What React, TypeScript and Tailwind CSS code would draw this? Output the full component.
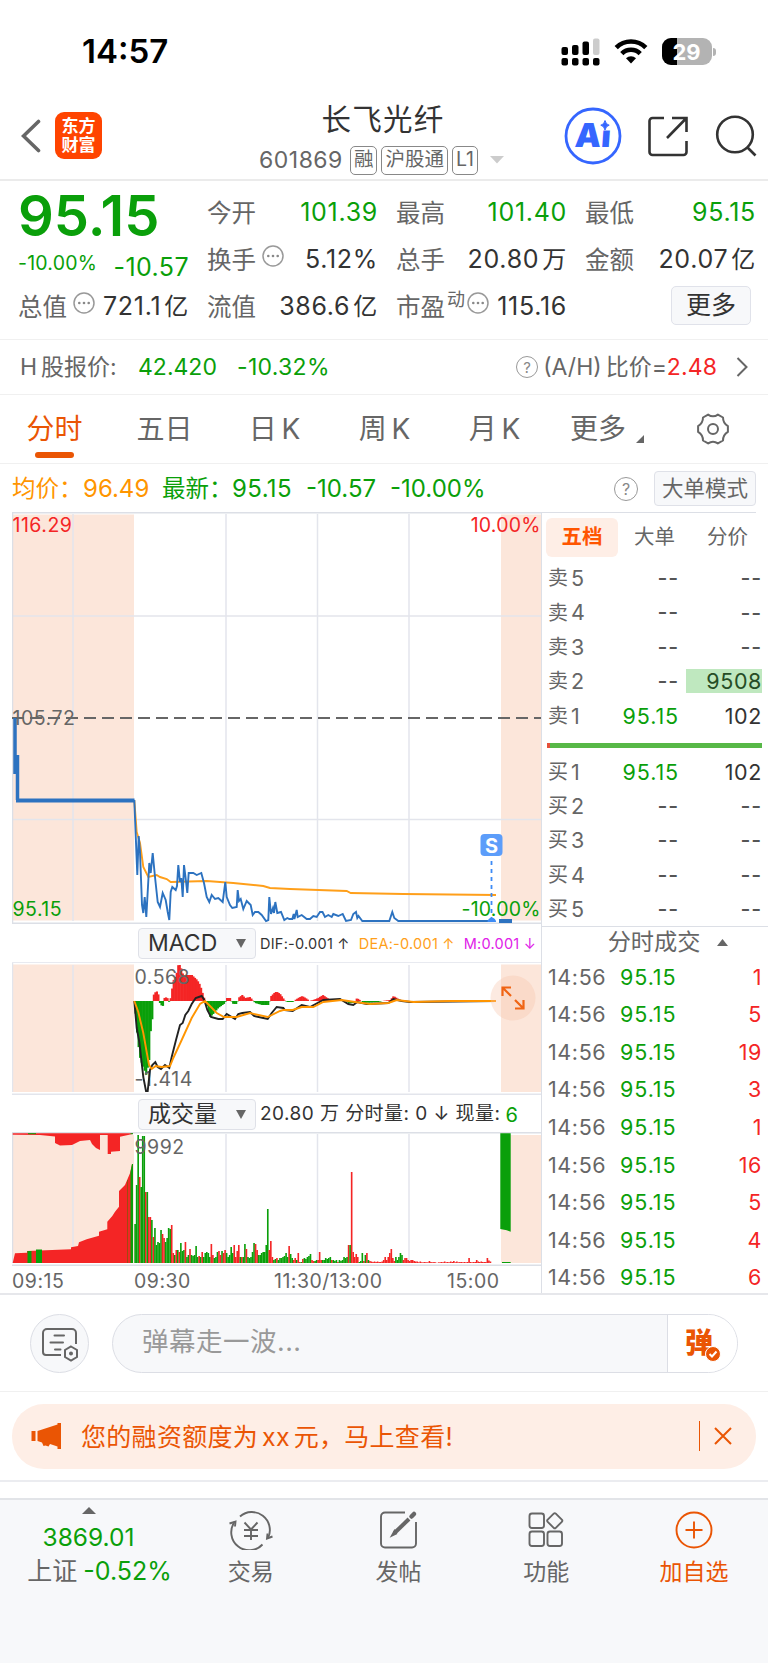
import React from 'react';
import clsx from 'clsx';

const QUOTES = [
  { label: '今开', value: '101.39', down: true },
  { label: '最高', value: '101.40', down: true },
  { label: '最低', value: '95.15', down: true },
  { label: '换手', value: '5.12%', hint: true },
  { label: '总手', value: '20.80', unit: '万' },
  { label: '金额', value: '20.07', unit: '亿' },
  { label: '总值', value: '721.1', unit: '亿', hint: true },
  { label: '流值', value: '386.6', unit: '亿' },
  { label: '市盈', value: '115.16', sup: '动', hint: true },
];

const TABS = ['分时', '五日', '日 K', '周 K', '月 K'];

const SELLS = [
  { side: '卖', level: 5, price: '--', volume: '--' },
  { side: '卖', level: 4, price: '--', volume: '--' },
  { side: '卖', level: 3, price: '--', volume: '--' },
  { side: '卖', level: 2, price: '--', volume: '9508' },
  { side: '卖', level: 1, price: '95.15', volume: '102' },
];

const BUYS = [
  { side: '买', level: 1, price: '95.15', volume: '102' },
  { side: '买', level: 2, price: '--', volume: '--' },
  { side: '买', level: 3, price: '--', volume: '--' },
  { side: '买', level: 4, price: '--', volume: '--' },
  { side: '买', level: 5, price: '--', volume: '--' },
];

const TRADES = [1, 5, 19, 3, 1, 16, 5, 4, 6];

const PRICE_LINE =
  '122.3,288 125.3,363 126.7,324 128,340 130,393 131.3,401 132.7,385 134.3,405 137.3,351 138.7,361 140.7,341 143,365 145.7,390 148,395 150.7,381 153.7,388 155.7,400 157.3,408 158.7,380 160.3,375 163.7,378 165,374 166.3,353 168,370 169.3,366 170.7,385 172,353 173.5,365 175.3,381 176.7,361 181.3,361 184.7,363 189.3,361 192,371 194.7,385 197.3,390 199.7,383 203,387 206.3,386 208.5,388 210.7,390 213.3,370 214.7,385 218,393 220.3,396 224.7,395 225.7,378 227,389 228.7,387 231.3,397 234.7,389 238.7,393 240.7,403 243,400 246.3,400 249.7,403 254,409 256.3,408 257.3,385 259,402 261,396 262,401 263.3,390 265.3,401 269,400 272.3,408 275.3,406 277.3,407 280.3,407 281.7,402 282.4,407 284.7,398 285.7,405 289.7,403 294.7,407 298,407 301.3,404 304.7,405 308,400 310.5,400 313,405 316.3,403 319.7,405 321.3,402 326.3,404 330.7,402 334,409 339,408 341.3,402 344,400 345.3,406 346.5,404 350.3,409 377.3,409 380.3,400 382.3,406 386.3,409 476,409';

const AVG_LINE =
  '122.3,288 124.7,320 128,331 131.3,355 136.3,365 144.7,363 148,365 154.7,367 158.7,370 194.7,369 221.3,371 251.3,374 258,376 278,377 334.7,379 338.7,381 391.3,382 484,383';

const DIF_LINE =
  '122.3,38 124.7,65 127.3,79 131.3,114 134,128 135.7,128 138,107 140.3,102 143.3,99 145.7,104 149,106 153,102 157.3,105 159.7,94 164,77 168,62 170.7,60 173.3,52 176.3,48 179.7,41 183.7,35 189.7,33 192.3,37 195.3,47 199,54 206.3,56 210.7,56 214.7,51 223,56 226.3,51 230.3,50 238,49 242,53 251.3,55 255.7,56 259.7,50 264.7,44 271.3,45 273,47 280.7,48 289.7,42 298,44 311.3,37 328,36 336.3,41 341.3,42 345.3,39 354.7,41 376.3,40 381.3,36 389.7,38 398,39 484,38';

const DEA_LINE =
  '122.3,38 126.3,49 131.3,70 137,102 139.7,106 143.7,103 149.7,104 158,103 161.3,95 169.7,77 179.7,55 188,41 193,38 198,43 204.7,50 212,54 224.7,54 238,50 255.7,54 268,48 271.3,47 280.7,47 289.7,44 301.3,44 311.3,39 329.7,37 343,39 358,41 376.3,40 384.7,37 401.3,39 438,38 484,38';

// [x, height] knots of the MACD histogram, positive is red
const MACD_KNOTS = [
  [122, 0], [124, -20], [125.3, -39], [128, -58], [131, -66], [134, -74], [137, -59], [138, -34], [140, -19],
  [141, 0], [141.7, 8], [145.5, 10], [147, 2], [148, -4], [151, -5], [152, 3], [155, 4], [156, 0], [158, -2],
  [158.7, 8], [160, 13], [161.3, 21], [164, 26], [166, 36], [168, 36], [171, 26], [179.7, 26], [185, 21],
  [188, 16], [191, 6], [193, 0], [194, -2], [198, -16], [202, -12], [206, -7], [213, -2], [214, 3], [218, 3],
  [219, 0], [221, -3], [225, -3], [226, 3], [230, 6], [233, 3], [238, 4], [241, 0], [243, -2], [250, -4],
  [257, -4], [258, 4], [263, 9], [265, 9], [268, 7], [273, 0], [275, -1], [281, -1], [283, 1], [286, 3],
  [290, 5], [295, 2], [297, 0], [301, 1], [306, 3], [310.7, 6], [315, 3], [318, 1.5], [326, 1], [334, 0],
  [336, -2], [342, -2], [344.7, 3], [349, 0], [350, -2], [366, -1], [370, 0], [378, 1], [381.3, 5], [387, 1.5], [390, 0],
];

// one bar per minute from 09:30, negative is a falling minute
const VOLUMES = [
  -39, -78, -128, 86, -76, -127, -127, 71, -71, 46, 46, -43, 26, -35, -18, -21, -20, -33, 29, 25,
  -21, -25, -35, -34, 38, 10, -8, 13, -13, 11, -20, -12, -13, 21, -6, -8, 14, -8, -7, -8,
  -17, -6, 7, -6, 11, -6, -10, -11, -10, -6, 19, 8, -5, -6, -11, 12, 8, -12, 10, 13,
  -10, -6, -8, -16, -10, 18, 6, 12, 18, -6, 6, -6, -19, 14, -6, -5, -6, -11, -20, 19,
  13, -8, -8, -10, -11, -11, -18, -54, 13, 22, 6, -3, -4, 5, -3, -5, -5, -6, -7, -10,
  -6, 17, -9, -5, 3, 5, -3, 10, 1, -1, 4, -5, -4, -6, -7, -9, 3, 2, -2, -3,
  3, 11, 3, -3, -3, -5, -4, -5, -6, 3, -3, -2, -3, 1, -3, -2, -3, -6, -5, -6,
  18, -18, 91, 11, 6, 9, 6, -1, -2, -10, 2, -8, 10, -3, 2, 1.5, 1, 1.5, 1, 1.5,
  1, 1, 1.5, 3, 6, 3, 6, 10, 14, 5, 2, -6, -3, -6, -10, -8, 3, 5, 5, 3,
  2, 3, 3, 2, 1.5, 1.5, 0.7, 1.5, 0.7, 0.7, 1, 0.7, 0.7, 2, 1, 0.7, 1, 0.7, 0, 0.7,
  0.7, 1, 0.7, 1.5, 0.7, 1, 0.7, 1.5, 1, 2, 0.7, 1.5, 0.7, 1, 1, 0.7, 1, 0.7, 1, 5,
  1, 0.7, 1, 1, 3, 1.5, 1, 1.5, 1, 1, 1, 5, 2.5, 1.5,
];

const STEP = 1.525;

const macdAt = (x: number) => {
  const i = MACD_KNOTS.findIndex(([kx]) => kx > x);
  if (i < 1) return 0;
  const [x0, y0] = MACD_KNOTS[i - 1];
  const [x1, y1] = MACD_KNOTS[i];
  return y0 + ((y1 - y0) * (x - x0)) / (x1 - x0);
};

const GridLines = ({ height }: { height: number }) => (
  <g stroke="#e3e5ec" strokeWidth="1.5">
    {[61, 214, 305.5, 397].map((x) => (
      <line key={x} x1={x} x2={x} y1={2} y2={height} />
    ))}
  </g>
);

const Dots = () => (
  <svg viewBox="0 0 22 22" className="size-[22px] shrink-0">
    <circle cx="11" cy="11" r="10" fill="none" stroke="#999" strokeWidth="1.5" />
    {[6.3, 11, 15.7].map((x) => (
      <circle key={x} cx={x} cy="11" r="1.3" fill="#888" />
    ))}
  </svg>
);

const Question = ({ className }: { className: string }) => (
  <span
    className={clsx(
      'flex shrink-0 items-center justify-center rounded-full border-[1.5px] border-[#999] leading-none text-[#888]',
      className
    )}
  >
    ?
  </span>
);

const StatusBar = () => (
  <div className="flex h-[92px] items-center justify-between pt-[11px] pr-[52px] pl-[82px]">
    <span className="text-[33px] font-semibold text-black">14:57</span>
    <div className="flex items-center">
      <svg viewBox="0 0 39 28" className="h-7 w-[39px]">
        <rect x="0.5" y="9" width="6.5" height="8" rx="2" />
        <rect x="11" y="7" width="6.5" height="10" rx="2" />
        <rect x="21.5" y="3.5" width="6.5" height="13.5" rx="2" />
        <rect x="32" y="0.5" width="6.5" height="16.5" rx="2" fill="#ccc" />
        {[0.5, 11, 21.5, 32].map((x) => (
          <rect key={x} x={x} y="20" width="6.5" height="7.5" rx="2" />
        ))}
      </svg>
      <svg viewBox="0 0 34 25" className="ml-[14px] h-[25px] w-[34px]" fill="none" stroke="#000" strokeWidth="4.6">
        <path d="M2.2 8.600a21 21 0 0 1 29.600 0" />
        <path d="M7.8 14.600a13 13 0 0 1 18.400 0" />
        <path d="M17 24.500l-5-5.200a7.300 7.300 0 0 1 10 0z" fill="#000" stroke="none" />
      </svg>
      <div className="relative ml-[14px] flex h-[27px] w-[50px] items-center justify-center overflow-hidden rounded-[9px] bg-[#b3b3b3]">
        <div className="absolute inset-y-0 left-0 w-[15px] bg-black" />
        <span className="relative text-[22px] leading-none font-bold text-white">29</span>
      </div>
      <div className="ml-[1.5px] h-2 w-[3px] rounded-r-full bg-[#b3b3b3]" />
    </div>
  </div>
);

const Header = () => (
  <header className="flex h-[89px] items-center border-b-2 border-[#ebebeb]">
    <svg viewBox="0 0 20 34" className="ml-[21px] h-[34px] w-5" fill="none" stroke="#666" strokeWidth="3.6" strokeLinecap="round">
      <path d="M17.5 2.500L2.500 17l15 14.500" />
    </svg>
    <div className="ml-[14px] flex size-[47px] flex-col items-center justify-center rounded-[9px] bg-[#ff4400] text-[17px] leading-[19px] font-bold text-white">
      <span>东方</span>
      <span>财富</span>
    </div>
    <div className="flex w-[461px] flex-col items-center pt-[4px] pl-[98px]">
      <h1 className="pl-[3px] text-[29.5px] leading-[36px] tracking-[1.2px] text-[#333]">长飞光纤</h1>
      <div className="mt-[9px] flex h-[29px] items-center gap-[4px] text-[#666]">
        <span className="mr-[3px] text-[23px] tracking-[0.5px]">601869</span>
        {['融', '沪股通', 'L1'].map((tag) => (
          <span key={tag} className="flex h-[29px] items-center rounded-[5px] border border-[#888] px-[3px] text-[19.5px]">
            {tag}
          </span>
        ))}
        <svg viewBox="0 0 14 8" className="ml-[8px] h-2 w-[14px]" fill="#ccc">
          <path d="M0 0h14l-7 7.500z" />
        </svg>
      </div>
    </div>
    <svg viewBox="0 0 58 58" className="ml-px size-[58px]">
      <circle cx="29" cy="29" r="27" fill="#fff" stroke="#3566ff" strokeWidth="2.8" />
      <text x="10.5" y="40.5" fontSize="33" fontWeight="900" fill="#3566ff" transform="skewX(-4) translate(2.5 0)">
        Ai
      </text>
      <rect x="34" y="12" width="14" height="11.5" fill="#fff" />
      <path d="M41 13.500q.8 4 4.200 4.700q-3.400.8-4.200 4.800q-.8-4-4.200-4.800q3.400-.7 4.200-4.700z" fill="#3566ff" stroke="#3566ff" />
    </svg>
    <svg viewBox="0 0 42 42" className="ml-[25px] size-[42px]" fill="none" stroke="#333" strokeWidth="2.6">
      <path d="M17 3H5.500a3 3 0 0 0-3 3v31a3 3 0 0 0 3 3h31a3 3 0 0 0 3-3V26" />
      <path d="M25 3h14.500v14M39 3.500L20 23" />
    </svg>
    <svg viewBox="0 0 42 42" className="ml-[26px] size-[42px]" fill="none" stroke="#333" strokeWidth="2.6">
      <circle cx="20" cy="19.5" r="17.8" />
      <path d="M32 32l8.500 8.500" />
    </svg>
  </header>
);

const QuotePanel = () => (
  <section className="grid h-[159px] grid-cols-[repeat(4,171px)] grid-rows-[repeat(3,47px)] gap-x-[18px] border-b border-[#f0f0f0] pt-2 pl-[18px] text-[25px]">
    <div className="row-span-2 text-[#0a9f0a]">
      <div className="pt-px text-[56px] leading-[52px] font-semibold">95.15</div>
      <div className="flex items-center justify-between pt-[5px] leading-[32px]">
        <span className="pb-[7px] text-[19.5px] tracking-[0.2px]">-10.00%</span>
        <span className="text-[25px] tracking-[0.4px]">-10.57</span>
      </div>
    </div>
    {QUOTES.map((q) => (
      <div key={q.label} className="flex items-center pt-px text-[#333]">
        <span className="text-[24.5px] text-[#666]">{q.label}</span>
        {q.sup && <span className="-mr-[4px] ml-[2px] pb-[15px] text-[18px] text-[#666]">{q.sup}</span>}
        {q.hint && (
          <span className="ml-[6px] pb-[9px]">
            <Dots />
          </span>
        )}
        <span className={clsx('ml-auto flex items-center gap-[3px] tracking-[0.7px]', q.down && 'text-[#0a9f0a]')}>
          {q.value}
          {q.unit && <span className="text-[24px]">{q.unit}</span>}
        </span>
      </div>
    ))}
    <button className="mt-[3px] ml-[86px] flex h-[39px] w-20 items-center justify-center rounded-[5px] border-[1.5px] border-[#e0e2ea] bg-[#f7f8fa] text-[25px] text-[#333]">
      更多
    </button>
  </section>
);

const HShareRow = () => (
  <section className="flex h-[55px] items-center border-b border-[#f0f0f0] pl-5 text-[23px] text-[#666]">
    <span className="flex w-[118px] items-center gap-[4px]">
      H<span>股报价:</span>
    </span>
    <span className="w-[99px] text-[#0a9f0a]">42.420</span>
    <span className="tracking-[0.3px] text-[#0a9f0a]">-10.32%</span>
    <Question className="ml-auto size-[22px] text-[15px]" />
    <span className="ml-[5px] flex items-center gap-[4px]">
      (A/H)<span>比价=</span>
    </span>
    <span className="tracking-[0.1px] text-[#f42525]">2.48</span>
    <svg viewBox="0 0 12 20" className="mr-[20px] ml-[19px] h-5 w-3" fill="none" stroke="#666" strokeWidth="2">
      <path d="M1.5 1l9 9l-9 9" />
    </svg>
  </section>
);

const PeriodTabs = () => (
  <nav className="flex h-[69px] items-center border-b border-[#f0f0f0] text-[28px] text-[#666]">
    {TABS.map((tab, i) => (
      <div
        key={tab}
        className={clsx('relative flex h-full w-[110px] items-center justify-center pr-[1px] [word-spacing:-3px]', i === 0 && 'text-[#ea5504]')}
      >
        {tab}
        {i === 0 && <span className="absolute bottom-[5px] h-[6px] w-[39px] rounded-full bg-[#ea5504]" />}
      </div>
    ))}
    <div className="flex w-[114px] items-center justify-center gap-[10px]">
      更多
      <svg viewBox="0 0 8 8" className="mt-[20px] size-2" fill="#666">
        <path d="M8 0v8H0z" />
      </svg>
    </div>
    <svg viewBox="0 0 32 32" className="ml-[33px] size-8" fill="none" stroke="#666" strokeWidth="2" strokeLinejoin="round">
      <path d="M20.9 1.600L26 4.500Q26 10.200 30.900 13.100V18.900Q26 21.800 26 27.500L20.900 30.400Q16 27 11.100 30.400L6 27.500Q6 21.800 1.100 18.900V13.100Q6 10.200 6 4.500L11.100 1.600Q16 5 20.900 1.600z" />
      <circle cx="16" cy="16" r="5" />
    </svg>
  </nav>
);

const PriceSummary = () => (
  <section className="flex h-[48px] items-center pt-px pr-3 pl-3 text-[24px] whitespace-nowrap text-[#0a9f0a]">
    <span className="w-[71px] text-[23.5px] text-[#ff9500]">均价：</span>
    <span className="w-[79px] text-[#ff9500]">96.49</span>
    <span className="w-[70px] text-[23.5px]">最新：</span>
    <span className="w-[74px] tracking-[0.4px]">95.15</span>
    <span className="w-[84px]">-10.57</span>
    <span>-10.00%</span>
    <Question className="ml-auto size-6 text-[16px]" />
    <span className="ml-[16px] flex h-[35px] w-[102px] items-center justify-center rounded-[4px] border-[1.5px] border-[#dfe1e8] bg-[#f7f8fa] text-[21.5px] text-[#666]">
      大单模式
    </span>
  </section>
);

const PriceChart = () => (
  <svg viewBox="0 0 529 412" className="h-[412px] w-[529px]" fontSize="19.5">
    <rect x="0" y="2.5" width="122" height="406" fill="#fce6da" />
    <rect x="489" y="2.5" width="40" height="406" fill="#fce6da" />
    <GridLines height={409} />
    <path d="M0 104h529M0 307.500h529" stroke="#e3e5ec" strokeWidth="1.5" />
    <path d="M0.500 411V0.700H529M0 411.200h529" fill="none" stroke="#dcdfe6" strokeWidth="1.5" />
    <path d="M0 206h529" stroke="#666" strokeWidth="1.8" strokeDasharray="12 6" />
    <polyline points={AVG_LINE} fill="none" stroke="#ff9f1a" strokeWidth="1.9" />
    <path d="M3 206v56M5.500 243v45" stroke="#2c72c0" strokeWidth="3.5" />
    <path d="M4 288.500h118.500" stroke="#2c72c0" strokeWidth="4" />
    <polyline points={PRICE_LINE} fill="none" stroke="#2c72c0" strokeWidth="1.9" />
    <path d="M487 409h13" stroke="#2c72c0" strokeWidth="4" />
    <text x="0.5" y="19.5" fill="#f42525" letterSpacing="0.5">116.29</text>
    <text x="528.5" y="19.5" textAnchor="end" fill="#f42525" letterSpacing="0.2">10.00%</text>
    <text x="0.5" y="212.5" fill="#666" letterSpacing="0.5">105.72</text>
    <text x="0.5" y="404" fill="#0a9f0a" letterSpacing="0.5">95.15</text>
    <path d="M479.5 349v60" stroke="#3d8bf5" strokeWidth="1.8" strokeDasharray="4 4" />
    <text x="528.5" y="404" textAnchor="end" fill="#0a9f0a" letterSpacing="0.2">-10.00%</text>
    <path d="M475.5 410a4.300 4.300 0 0 1 8.600 0z" fill="#3d8bf5" />
    <rect x="468.5" y="322" width="22" height="22" rx="4" fill="#5c9dfa" />
    <text x="479.500" y="340.5" textAnchor="middle" fontSize="20" fontWeight="700" fill="#fff">S</text>
  </svg>
);

const IndicatorSelect = ({ name }: { name: string }) => (
  <div className="ml-[126px] flex h-[31px] w-[118px] shrink-0 items-center justify-between rounded-[4px] border-[1.5px] border-[#dfe1e8] bg-[#f7f8fa] pr-[9px] pl-[9px] text-[23px] tracking-normal text-[#333]">
    {name}
    <svg viewBox="0 0 10 9" className="h-[9px] w-[10px]" fill="#666">
      <path d="M0 0h10l-5 9z" />
    </svg>
  </div>
);

const MacdChart = () => (
  <div className="relative h-[132px]">
    <svg viewBox="0 0 529 132" className="h-[132px] w-[529px]" fontSize="19.5" letterSpacing="0.5">
      <rect x="0" y="1.5" width="122" height="127.5" fill="#fce6da" />
      <rect x="489" y="1.5" width="40" height="127.5" fill="#fce6da" />
      <GridLines height={129} />
      <path d="M0.500 0v129M0 131.200h529" stroke="#e3e5ec" strokeWidth="1.5" />
      {Array.from({ length: 176 }, (_, i) => {
        const x = 122.5 + i * STEP;
        const h = macdAt(x + STEP / 2);
        return (
          <rect
            key={i}
            x={x}
            y={h > 0 ? 38 - h : 38}
            width={STEP + 0.6}
            height={Math.abs(h)}
            fill={h > 0 ? '#f42525' : '#0a9f0a'}
          />
        );
      })}
      <text x="122.5" y="20.5" fill="#666">0.568</text>
      <text x="122.5" y="123" fill="#666">-1.414</text>
      <polyline points={DIF_LINE} fill="none" stroke="#222" strokeWidth="1.9" />
      <polyline points={DEA_LINE} fill="none" stroke="#ff9500" strokeWidth="1.9" />
    </svg>
    <svg viewBox="0 0 46 46" className="absolute top-[12px] left-[478px] size-[46px]" fill="none" stroke="#f06414" strokeWidth="2.2">
      <circle cx="23" cy="23" r="22.5" fill="#f5c3a8" fillOpacity="0.35" stroke="none" />
      <path d="M12.5 21v-8.500H21M12.500 12.500l8.500 8.500M33.500 25v8.500H25M33.500 33.500L25 25" />
    </svg>
  </div>
);

const VolumeChart = () => (
  <svg viewBox="0 0 529 134" className="h-[134px] w-[529px]" fontSize="19.5" letterSpacing="0.5">
    <rect x="0" y="3" width="122" height="128" fill="#fce6da" />
    <rect x="489" y="3" width="40" height="128" fill="#fce6da" />
    <GridLines height={131} />
    <path d="M0.500 0v131M0 0.700h529M0 133.200h529" stroke="#dcdfe6" strokeWidth="1.5" />
    <path
      d="M.7 1.300V2.700L28 3L43 4.500V11L48 13.500L60 13L68 9L78 8L80 12L84 16L88 18V3H95.700V22H99V19.700L108 19V4.700L116 3L121 2V1.300z"
      fill="#f42525"
    />
    <path
      d="M.7 131L3 121.300L15 120.700V119L59 117.300V115.300L66 114L67 110.300L74.700 107.300L87 103.700V99.700L95.300 97.300V89.700L100.300 84L103 79.700L107 74.700V59L113 53L118 41.300L120 32H121V131z"
      fill="#f42525"
    />
    <path d="M15.5 131V119h4v12zM24 131V117.500h6V131zM118.500 131V40l1.500-8h1v99z" fill="#0a9f0a" />
    <path d="M115.5 131V48" stroke="#a04a10" />
    <path d="M16 1.700h8M118.500 1.700h2.500" stroke="#0a9f0a" />
    {VOLUMES.map((v, i) => (
      <rect
        key={i}
        x={122.3 + i * STEP}
        y={131 - Math.abs(v)}
        width={STEP + 0.1}
        height={Math.abs(v)}
        fill={v > 0 ? '#f42525' : '#0a9f0a'}
      />
    ))}
    <path d="M488.3 1.300h10.400v98.400l-4-1.500l-6.400-1.200zM490 130h8.700v1H490z" fill="#0a9f0a" />
    <text x="122.5" y="22" fill="#666">9992</text>
  </svg>
);

const ChartColumn = () => (
  <div className="w-[529px]">
    <PriceChart />
    <div className="flex h-[39px] items-center border-b-[1.5px] border-[#e8eaf0] pt-px text-[14.5px] tracking-[0.25px] whitespace-nowrap">
      <IndicatorSelect name="MACD" />
      <span className="ml-1 text-[#333]">DIF:-0.001 ↑</span>
      <span className="ml-[9px] text-[#ff9f1a]">DEA:-0.001 ↑</span>
      <span className="ml-[9px] text-[#e020e8]">M:0.001 ↓</span>
    </div>
    <MacdChart />
    <div className="flex h-[37px] items-center pt-[2px] text-[19px] tracking-[0.45px] whitespace-nowrap text-[#333]">
      <IndicatorSelect name="成交量" />
      <span className="ml-[4px]">20.80 万 分时量: 0 ↓ 现量:</span>
      <span className="ml-[5px] text-[20px] text-[#0a9f0a]">6</span>
    </div>
    <VolumeChart />
    <div className="flex h-[28px] items-center pt-[3px] text-[19.5px] tracking-[0.5px] text-[#666]">
      <span className="w-[122px]">09:15</span>
      <span className="w-[140px]">09:30</span>
      <span className="w-[173px]">11:30/13:00</span>
      <span>15:00</span>
    </div>
  </div>
);

interface LevelProps {
  side: string;
  level: number;
  price: string;
  volume: string;
}

const LevelRow = ({ side, level, price, volume }: LevelProps) => {
  const cell = (text: string) => (text === '--' ? 'font-medium tracking-[0.8px] text-[#555]' : 'tracking-[0.6px]');
  return (
    <div className="flex h-[34.4px] items-center pr-[6px] pl-[6px] text-[21.5px] text-[#333]">
      <span className="flex w-[51px] items-center gap-[3px] text-[#666]">
        <span className="text-[20px]">{side}</span>
        {level}
      </span>
      <span className={clsx('w-[80px] text-right', cell(price), price !== '--' && 'tracking-[0.9px] text-[#0a9f0a]')}>{price}</span>
      <span
        className={clsx(
          'ml-[7px] h-6 flex-1 text-right leading-6',
          cell(volume),
          volume === '9508' && 'bg-[#bfe8bf] text-[#264d26]'
        )}
      >
        {volume}
      </span>
    </div>
  );
};

const OrderBook = () => (
  <aside className="w-[227px] border-l-[1.5px] border-[#dcdfe6]">
    <div className="mr-3 border-t-[1.5px] border-[#dcdfe6]" />
    <div className="flex h-[48px] items-center pl-[4px] text-[20.5px] text-[#666]">
      <span className="flex h-[39px] w-[72px] items-center justify-center rounded-[6px] bg-[#feeee6] font-bold text-[#ff5500]">五档</span>
      <span className="w-[73px] text-center">大单</span>
      <span className="w-[73px] text-center">分价</span>
    </div>
    {SELLS.map((row) => (
      <LevelRow key={row.level} {...row} />
    ))}
    <div className="mt-[10px] mr-[6px] mb-[6.5px] ml-[5px] flex h-[5px] bg-[#57b847]">
      <span className="w-[3px] bg-[#e55039]" />
    </div>
    {BUYS.map((row) => (
      <LevelRow key={row.level} {...row} />
    ))}
    <div className="flex h-[31.5px] items-center justify-center gap-[17px] border-t-[1.5px] border-[#dcdfe6] pl-[26px] text-[23.2px] text-[#666]">
      分时成交
      <svg viewBox="0 0 11 7" className="h-[7px] w-[11px]" fill="#666">
        <path d="M0 7h11L5.500 0z" />
      </svg>
    </div>
    {TRADES.map((hands, i) => (
      <div key={i} className="flex h-[37.6px] items-center pr-[6px] pl-[6px] text-[21.5px] tracking-[0.6px]">
        <span className="w-[72px] text-[#666]">14:56</span>
        <span className="tracking-[0.9px] text-[#0a9f0a]">95.15</span>
        <span className="ml-auto text-[#f42525]">{hands}</span>
      </div>
    ))}
  </aside>
);

const DanmakuBar = () => (
  <section className="flex h-[99px] items-center border-t-2 border-b border-t-[#e6e7eb] border-b-[#f0f0f0] pl-[30px]">
    <div className="flex size-[59px] items-center justify-center rounded-full border-[1.5px] border-[#dcdee5] bg-[#f7f8fa]">
      <svg viewBox="0 0 36 34" className="mt-1 h-[34px] w-9" fill="none" stroke="#666" strokeWidth="2">
        <path d="M34 16V5a4 4 0 0 0-4-4H5a4 4 0 0 0-4 4v19a3 3 0 0 0 3 3h15" />
        <path d="M12.5 7.500H22M8.500 14.500h12.500M13 21.500h5.500" strokeLinecap="round" />
        <path d="M29 18.500l6 3.500v7l-6 3.500l-6-3.500v-7z" />
        <circle cx="29" cy="25.5" r="1" fill="#666" />
      </svg>
    </div>
    <div className="ml-[23px] flex h-[59px] w-[626px] overflow-hidden rounded-full border-[1.5px] border-[#dcdee5] bg-[#f7f8fa]">
      <span className="flex-1 pl-[29px] text-[26.5px] leading-[52px] tracking-[0.5px] text-[#999]">弹幕走一波...</span>
      <div className="relative flex w-[70px] items-center border-l-[1.5px] border-[#dcdee5] bg-white pl-[17px] text-[28px] leading-none font-black text-[#ea5504]">
        弹
        <svg viewBox="0 0 16 16" className="absolute top-[31px] left-[37px] size-4" fill="none">
          <circle cx="8" cy="8" r="7.5" fill="#ea5504" stroke="#fff" />
          <path d="M4.5 8l2.500 2.500l4.500-5" stroke="#fff" strokeWidth="2" />
        </svg>
      </div>
    </div>
  </section>
);

const Banner = () => (
  <section className="flex h-[90px] items-center border-b-2 border-[#ebecf0] px-3">
    <div className="flex h-[65px] flex-1 items-center rounded-[32px] bg-[#feeee6] pl-[19px] text-[25px] text-[#ea5504]">
      <svg viewBox="0 0 31 26" className="h-[26px] w-[31px]" fill="#ea5504">
        <path d="M0.500 8h4v10h-4zM6.500 8L26.500 1.500V0H30v26h-3.500v-2.500L19 21l-1.500 2.500l-3-1l-2 .5l-1.500-3.500l-4.500-1.500z" />
      </svg>
      <span className="ml-[19px] pt-[3px] tracking-[0.3px] [word-spacing:-3.5px]">您的融资额度为 xx 元，马上查看!</span>
      <span className="ml-auto h-[30px] w-[1.5px] bg-[#ea5504]" />
      <svg viewBox="0 0 18 18" className="mr-[24px] ml-[14px] size-[18px]" stroke="#ea5504" strokeWidth="2">
        <path d="M1 1l16 16M17 1L1 17" />
      </svg>
    </div>
  </section>
);

const NavItem = ({ label, active, children }: { label: string; active?: boolean; children: React.ReactNode }) => (
  <div className={clsx('flex w-[147.7px] flex-col items-center pt-[10px]', active ? 'text-[#ea5504]' : 'text-[#666]')}>
    <svg viewBox="0 0 44 40" className="h-10 w-11" fill="none" stroke="currentColor" strokeWidth="1.9">
      {children}
    </svg>
    <span className="mt-[5px] text-[23px] leading-[34px]">{label}</span>
  </div>
);

const BottomNav = () => (
  <footer className="flex flex-1 border-t-2 border-[#e2e4e8] bg-[#f7f8fa]">
    <div className="flex w-[177px] flex-col items-center pt-[7px] text-[25px] text-[#666]">
      <svg viewBox="0 0 14 7" className="h-[7px] w-[14px]" fill="#666">
        <path d="M0 7h14L7 0z" />
      </svg>
      <span className="mt-[6px] text-[24.5px] leading-[34px] text-[#0a9f0a]">3869.01</span>
      <span className="flex items-center gap-[6px] pl-[22px] leading-[35px] whitespace-nowrap">
        上证<span className="text-[#0a9f0a]">-0.52%</span>
      </span>
    </div>
    <NavItem label="交易">
      <path d="M11 6.500A18 18 0 0 1 39 28M33.500 34.500A18 18 0 0 1 5.500 12" />
      <path d="M.5 13.500l6-2l-.500 5M43.500 26.500l-5.500 2l.500-5" />
      <path d="M15.5 12.500l6.500 7l6.500-7M15 20h14M15 26h14M22 19.500v10.500" />
    </NavItem>
    <NavItem label="发帖">
      <path d="M28 2.500H8a4 4 0 0 0-4 4v27a4 4 0 0 0 4 4h27a4 4 0 0 0 4-4V12" />
      <path d="M32 9L17.500 23" strokeWidth="4" />
      <path d="M17.5 21l-2.500 4.500l4-2z" fill="currentColor" />
      <path d="M34.5 6.500l2.500-2.500" strokeWidth="4.5" strokeLinecap="round" />
    </NavItem>
    <NavItem label="功能">
      <rect x="5.5" y="3.5" width="14.5" height="14.5" rx="2.5" />
      <rect x="5.5" y="21.5" width="14.5" height="14.5" rx="2.5" />
      <rect x="23.5" y="21.5" width="14.5" height="14.5" rx="2.5" />
      <rect x="25" y="5" width="11.5" height="11.5" rx="1.5" transform="rotate(45 30.75 10.75)" />
    </NavItem>
    <NavItem label="加自选" active>
      <circle cx="22" cy="20" r="17.5" />
      <path d="M22 11.500v17M13.500 20h17" />
    </NavItem>
  </footer>
);

const App: React.FC = () => {
  return (
    <div className="flex h-[1663px] w-[768px] flex-col overflow-hidden bg-white font-['Inter','Noto_Sans_CJK_SC',sans-serif]">
      <StatusBar />
      <Header />
      <QuotePanel />
      <HShareRow />
      <PeriodTabs />
      <PriceSummary />
      <main className="flex h-[781px] pl-3">
        <ChartColumn />
        <OrderBook />
      </main>
      <DanmakuBar />
      <Banner />
      <div className="h-4" />
      <BottomNav />
    </div>
  );
};

export default App;
